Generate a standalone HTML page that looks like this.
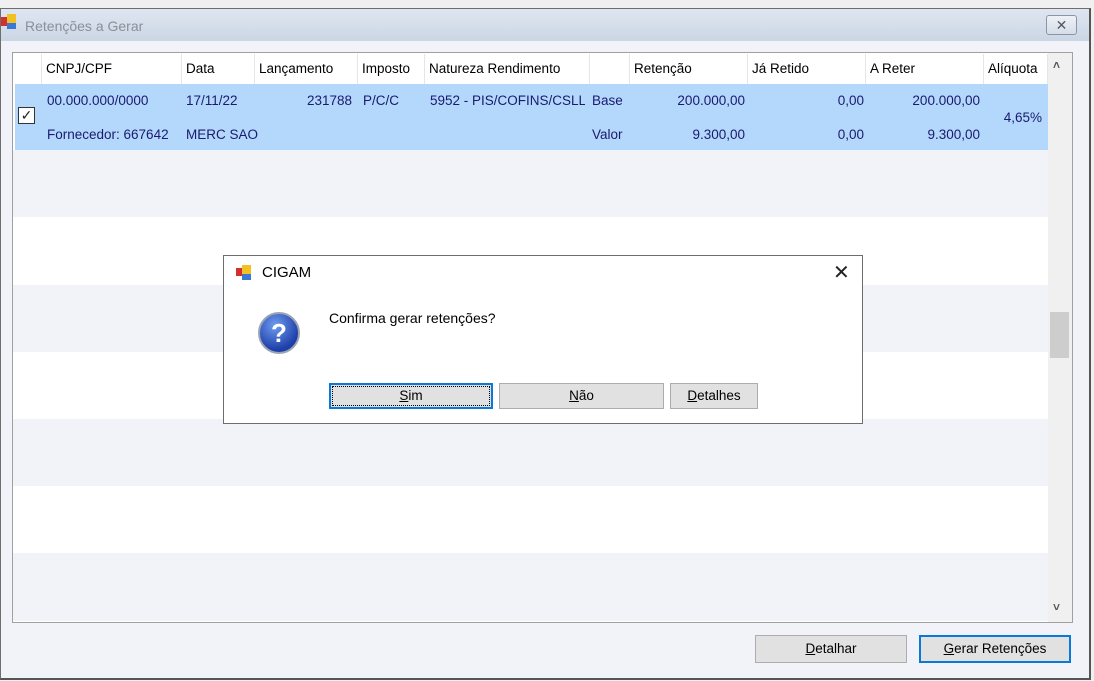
<!DOCTYPE html>
<html><head><meta charset="utf-8"><style>
*{margin:0;padding:0;box-sizing:border-box}
body{width:1094px;height:681px;background:#f0f0f0;font-family:"Liberation Sans",sans-serif;font-size:13px;position:relative;overflow:hidden}
.abs{position:absolute}
.win{left:0;top:8px;width:1091px;height:672px;border:1px solid #6e6e6e;border-right:2px solid #555;border-bottom:2px solid #555;background:#f1f3f9}
.title{left:1px;top:9px;width:1088px;height:32px;background:linear-gradient(#dfe6f0,#cbd6e5)}
.grid{left:12px;top:52px;width:1061px;height:571px;border:1px solid #a0a0a0;background:#fff}
.hdr{position:absolute;top:54px;height:30px;line-height:30px;background:#fff;border-right:1px solid #e6e6e6;padding-left:4px;color:#000;font-size:13.5px;white-space:nowrap;overflow:hidden}
.t{position:absolute;color:#1a1a6e;font-size:13.5px;white-space:nowrap}
.r{text-align:right}
.band{position:absolute;left:13px;width:1035px;height:67px;background:#f1f3f9}
.btn{position:absolute;background:#e1e1e1;border:1px solid #adadad;text-align:center;font-size:13.5px;color:#000}
</style></head><body>
<div class="abs win"></div>
<div class="abs title"></div>
<div class="abs" style="left:1px;top:17px;width:7px;height:9px;background:#d03030"></div>
<div class="abs" style="left:7px;top:14px;width:9px;height:9px;background:#f2c020"></div>
<div class="abs" style="left:7px;top:23px;width:9px;height:6px;background:#3a78d8"></div>
<div class="abs" style="left:25px;top:18px;color:#8a8f98;font-size:14px">Retenções a Gerar</div>
<div class="abs" style="left:1046px;top:15px;width:31px;height:20px;border:1px solid #8a96a8;border-radius:3px;background:linear-gradient(#eef2f7,#d6dde8);text-align:center;line-height:18px;color:#556;font-size:14px">✕</div>
<div class="abs grid"></div>
<div class="band" style="top:150px"></div>
<div class="band" style="top:285px"></div>
<div class="band" style="top:419px"></div>
<div class="band" style="top:553px;height:68px"></div>
<div class="abs" style="left:1048px;top:53px;width:24px;height:569px;background:#f0f0f0"></div>
<div class="abs" style="left:1050px;top:312px;width:19px;height:46px;background:#cdcdcd"></div>
<div class="abs" style="left:1053px;top:58px;color:#555;font-size:12px;font-weight:bold">˄</div>
<div class="abs" style="left:1053px;top:600px;color:#555;font-size:12px;font-weight:bold">˅</div>
<div class="hdr" style="left:13px;width:29px"></div>
<div class="hdr" style="left:42px;width:140px">CNPJ/CPF</div>
<div class="hdr" style="left:182px;width:73px">Data</div>
<div class="hdr" style="left:255px;width:103px">Lançamento</div>
<div class="hdr" style="left:358px;width:67px">Imposto</div>
<div class="hdr" style="left:425px;width:165px">Natureza Rendimento</div>
<div class="hdr" style="left:590px;width:40px"></div>
<div class="hdr" style="left:630px;width:118px">Retenção</div>
<div class="hdr" style="left:748px;width:118px">Já Retido</div>
<div class="hdr" style="left:866px;width:118px">A Reter</div>
<div class="hdr" style="left:984px;width:64px">Alíquota</div>
<div class="abs" style="left:15px;top:84px;width:1033px;height:66px;background:#b3d8fc"></div>
<div class="abs" style="left:18px;top:107px;width:17px;height:17px;border:1px solid #333;background:#fff;text-align:center;line-height:15px;font-size:14px;color:#222">✓</div>
<div class="t" style="left:47px;top:93px">00.000.000/0000</div>
<div class="t" style="left:47px;top:127px">Fornecedor: 667642</div>
<div class="t" style="left:186px;top:93px">17/11/22</div>
<div class="t" style="left:186px;top:127px">MERC SAO</div>
<div class="t r" style="left:260px;width:92px;top:93px">231788</div>
<div class="t" style="left:363px;top:93px">P/C/C</div>
<div class="t" style="left:430px;top:93px;width:155px;overflow:hidden">5952 - PIS/COFINS/CSLL</div>
<div class="t" style="left:592px;top:93px">Base</div>
<div class="t" style="left:592px;top:127px">Valor</div>
<div class="t r" style="left:630px;width:115px;top:93px">200.000,00</div>
<div class="t r" style="left:630px;width:115px;top:127px">9.300,00</div>
<div class="t r" style="left:748px;width:116px;top:93px">0,00</div>
<div class="t r" style="left:748px;width:116px;top:127px">0,00</div>
<div class="t r" style="left:866px;width:114px;top:93px">200.000,00</div>
<div class="t r" style="left:866px;width:114px;top:127px">9.300,00</div>
<div class="t r" style="left:984px;width:58px;top:110px">4,65%</div>
<div class="btn" style="left:755px;top:635px;width:152px;height:28px;line-height:26px"><u>D</u>etalhar</div>
<div class="btn" style="left:919px;top:635px;width:152px;height:28px;line-height:24px;border:2px solid #0a78d7"><u>G</u>erar Retenções</div>
<!-- dialog -->
<div class="abs" style="left:223px;top:255px;width:640px;height:169px;background:#fff;border:1px solid #6d6d6d"></div>
<div class="abs" style="left:236px;top:268px;width:6px;height:8px;background:#d03030"></div>
<div class="abs" style="left:242px;top:265px;width:9px;height:9px;background:#f2c020"></div>
<div class="abs" style="left:242px;top:274px;width:9px;height:6px;background:#3a78d8"></div>
<div class="abs" style="left:262px;top:264px;font-size:15px;color:#000">CIGAM</div>
<div class="abs" style="left:833px;top:260px;font-size:20px;color:#222">✕</div>
<div class="abs" style="left:258px;top:312px;width:42px;height:42px;border-radius:50%;border:2px solid #9aa4b4;background:radial-gradient(circle at 40% 30%,#6f9cf0,#1d3fa8 70%);color:#fff;font-weight:bold;font-size:26px;text-align:center;line-height:38px">?</div>
<div class="abs" style="left:329px;top:310px;font-size:14px;color:#000">Confirma gerar retenções?</div>
<div class="btn" style="left:329px;top:383px;width:164px;height:26px;line-height:22px;border:2px solid #0a78d7;outline:1px dotted #000;outline-offset:-4px"><u>S</u>im</div>
<div class="btn" style="left:499px;top:383px;width:165px;height:26px;line-height:24px"><u>N</u>ão</div>
<div class="btn" style="left:670px;top:383px;width:88px;height:26px;line-height:24px"><u>D</u>etalhes</div>
</body></html>
